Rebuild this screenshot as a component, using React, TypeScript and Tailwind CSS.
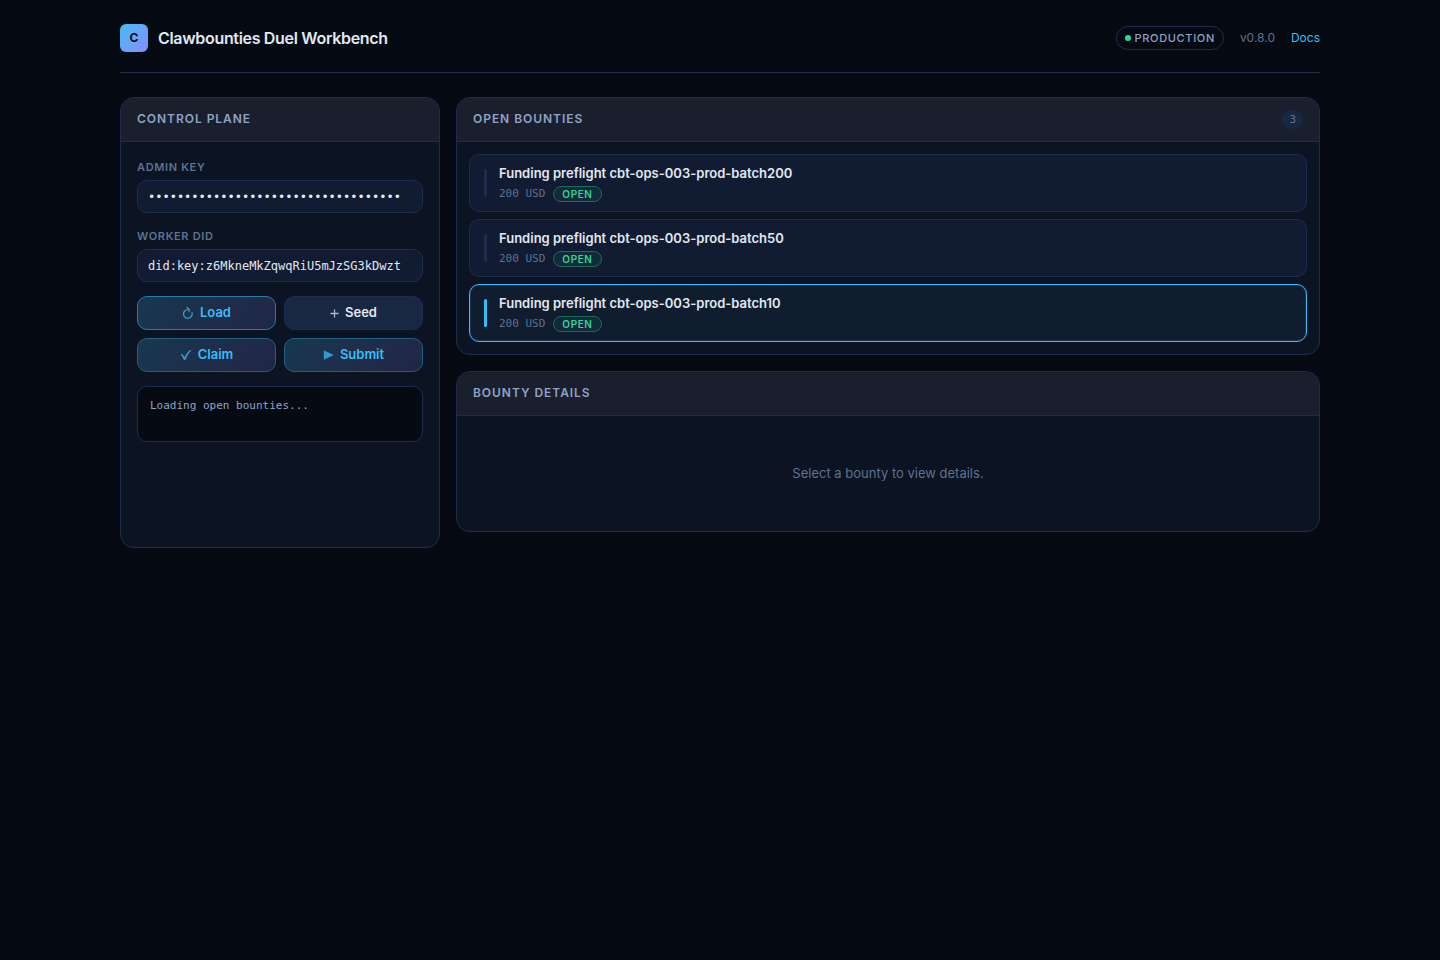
import { useState } from "react";

const bounties = [
  { id: "batch200", title: "Funding preflight cbt-ops-003-prod-batch200", reward: "200 USD", status: "Open" },
  { id: "batch50", title: "Funding preflight cbt-ops-003-prod-batch50", reward: "200 USD", status: "Open" },
  { id: "batch10", title: "Funding preflight cbt-ops-003-prod-batch10", reward: "200 USD", status: "Open" },
];

const mono = "font-['DejaVu_Sans_Mono',monospace]";

const inputClass = `h-[33px] w-full rounded-[10px] border border-[#1e2d4d] bg-[#111b32] px-2.5 text-[12px] text-[#e2e8f0] outline-none focus:border-[#38bdf8] ${mono}`;

const labelClass = "text-[11px] leading-[18px] font-semibold tracking-[0.06em] text-[#5d7290] uppercase";

function ReloadIcon() {
  return (
    <svg width="12" height="12" viewBox="0 0 12 12" fill="none" stroke="currentColor" aria-hidden="true">
      <path d="M6.6 2.6H5.8A4.3 4.3 0 1 0 10.1 6.2L9.9 5.4" strokeWidth="1.4" />
      <path d="M4.6 0L7.2 2.4V5.2" strokeWidth="1.3" />
    </svg>
  );
}

function PlusIcon() {
  return (
    <svg width="9" height="12" viewBox="0 0 9 12" fill="none" stroke="currentColor" aria-hidden="true">
      <path d="M4.5 2.5V10.5M0.5 6.5H8.5" strokeWidth="1.3" />
    </svg>
  );
}

function CheckIcon() {
  return (
    <svg width="12" height="12" viewBox="0 0 12 12" fill="currentColor" aria-hidden="true">
      <path d="M0.6 5.8L2.3 4.9C3.1 5.8 3.8 6.9 4.4 8.2C5.9 5.2 7.9 2.6 9.8 0.9H11.4C8.9 3.6 7 6.9 5.3 11H4C3 8.9 2 7.2 0.6 5.8Z" />
    </svg>
  );
}

function PlayIcon() {
  return (
    <svg width="11" height="12" viewBox="0 0 11 12" fill="currentColor" aria-hidden="true">
      <path d="M0.8 1.2L10.8 6L0.8 10.8Z" />
    </svg>
  );
}

function Panel({ title, count, children }: any) {
  return (
    <section className="overflow-hidden rounded-[14px] border border-[#1e2d4d] bg-[#0c1322]">
      <div className="flex h-11 items-start justify-between border-b border-[#1e2d4d] bg-[#1a1f2e] px-4 py-3">
        <h2 className="text-[12px] leading-[18px] font-semibold tracking-[0.08em] text-[#8fa3c4] uppercase">
          {title}
        </h2>
        {count !== undefined && (
          <span className={`rounded-full bg-[#182742] px-[7px] text-[11px] leading-[19px] text-[#5d7290] ${mono}`}>
            {count}
          </span>
        )}
      </div>
      {children}
    </section>
  );
}

function ActionButton({ icon, label, primary, bright, onClick }: any) {
  return (
    <button
      type="button"
      onClick={onClick}
      className={`flex h-[34px] items-center justify-center gap-1.5 rounded-[10px] border text-[13px] font-semibold ${
        primary
          ? "bg-linear-135 from-[#17384f] to-[#212546] text-[#38bdf8]"
          : "border-[#1e2d4d] bg-[#182742] text-[#e2e8f0]"
      } ${primary ? (bright ? "border-[#2a7ba6]" : "border-[#235f85]") : ""}`}
    >
      <span className="opacity-75">{icon}</span>
      {label}
    </button>
  );
}

export default function App() {
  const [adminKey, setAdminKey] = useState("0123456789abcdef0123456789abcdef012");
  const [workerDid, setWorkerDid] = useState("did:key:z6MkneMkZqwqRiU5mJzSG3kDwzt");
  const [selected, setSelected] = useState("batch10");
  const [log, setLog] = useState("Loading open bounties...");

  return (
    <div className="min-h-screen bg-[#060b13] font-['Inter',sans-serif] text-[#e2e8f0]">
      <div className="mx-auto max-w-[1248px] px-6 pt-6 pb-12">
        {/* Top bar */}
        <header className="mb-6 flex items-center justify-between border-b border-[#1e2d4d] pb-5">
          <div className="flex items-center gap-2.5">
            <div className="flex size-7 items-center justify-center rounded-md bg-linear-135 from-[#38bdf8] to-[#818cf8] text-[12px] font-bold text-[#060a12]">
              C
            </div>
            <h1 className="text-[16px] leading-7 font-semibold tracking-[-0.02em]">Clawbounties Duel Workbench</h1>
          </div>
          <div className="flex items-center gap-4 text-[12px]">
            <span className="flex h-6 items-center gap-1 rounded-full border border-[#1e2d4d] px-2 text-[11px] font-medium tracking-[0.06em] text-[#8fa3c4] uppercase">
              <span className="size-1.5 rounded-full bg-[#34d399]" />
              Production
            </span>
            <span className="text-[#5d7290]">v0.8.0</span>
            <a href="#docs" className="text-[#38bdf8]">
              Docs
            </a>
          </div>
        </header>

        <main className="grid grid-cols-[320px_1fr] gap-4">
          <Panel title="Control Plane">
            <div className="flex flex-col gap-3.5 p-4">
              <div className="flex flex-col gap-1">
                <label htmlFor="admin-key" className={labelClass}>
                  Admin Key
                </label>
                <input
                  id="admin-key"
                  type="password"
                  value={adminKey}
                  onChange={(e) => setAdminKey(e.target.value)}
                  className={inputClass}
                />
              </div>
              <div className="flex flex-col gap-1">
                <label htmlFor="worker-did" className={labelClass}>
                  Worker DID
                </label>
                <input
                  id="worker-did"
                  type="text"
                  value={workerDid}
                  onChange={(e) => setWorkerDid(e.target.value)}
                  className={inputClass}
                />
              </div>

              <div className="grid grid-cols-2 gap-2">
                <ActionButton
                  icon={<ReloadIcon />}
                  label="Load"
                  primary
                  bright
                  onClick={() => setLog("Loading open bounties...")}
                />
                <ActionButton icon={<PlusIcon />} label="Seed" />
                <ActionButton icon={<CheckIcon />} label="Claim" primary />
                <ActionButton icon={<PlayIcon />} label="Submit" primary />
              </div>

              <pre
                className={`min-h-14 rounded-[10px] border border-[#1e2d4d] bg-[#060a12] px-3 py-2.5 text-[11px] leading-[18px] whitespace-pre-wrap text-[#8fa3c4] ${mono}`}
              >
                {log}
              </pre>
            </div>
          </Panel>

          <div className="flex flex-col gap-4 pb-4">
            <Panel title="Open Bounties" count={bounties.length}>
              <ul className="flex flex-col gap-[7px] p-3">
                {bounties.map((b) => (
                  <li key={b.id}>
                    <button
                      type="button"
                      onClick={() => setSelected(b.id)}
                      className={`flex h-[58px] w-full items-center gap-3 rounded-[10px] border px-3.5 text-left ${
                        b.id === selected
                          ? "border-[#38bdf8] bg-[#0f1d2f] inset-ring inset-ring-[#38bdf8]/15"
                          : "border-[#1e2d4d] bg-[#111b32]"
                      }`}
                    >
                      <span
                        className={`h-7 w-[3px] rounded-sm ${b.id === selected ? "bg-[#38bdf8]" : "bg-[#1e2d4d]"}`}
                      />
                      <span className="flex flex-col gap-0.5">
                        <span className="text-[13px] leading-[19px] font-semibold">{b.title}</span>
                        <span className="flex items-center gap-2">
                          <span className={`text-[11px] leading-[18px] text-[#5d7290] ${mono}`}>{b.reward}</span>
                          <span className="h-4 rounded-full border border-[#1d6b5c] bg-[#122b38] px-2 text-[10px] leading-[14px] font-semibold tracking-[0.06em] text-[#34d399] uppercase">
                            {b.status}
                          </span>
                        </span>
                      </span>
                    </button>
                  </li>
                ))}
              </ul>
            </Panel>

            <Panel title="Bounty Details">
              <p className="px-4 py-12 text-center text-[13px] leading-[19px] text-[#5d7290]">
                Select a bounty to view details.
              </p>
            </Panel>
          </div>
        </main>
      </div>
    </div>
  );
}
